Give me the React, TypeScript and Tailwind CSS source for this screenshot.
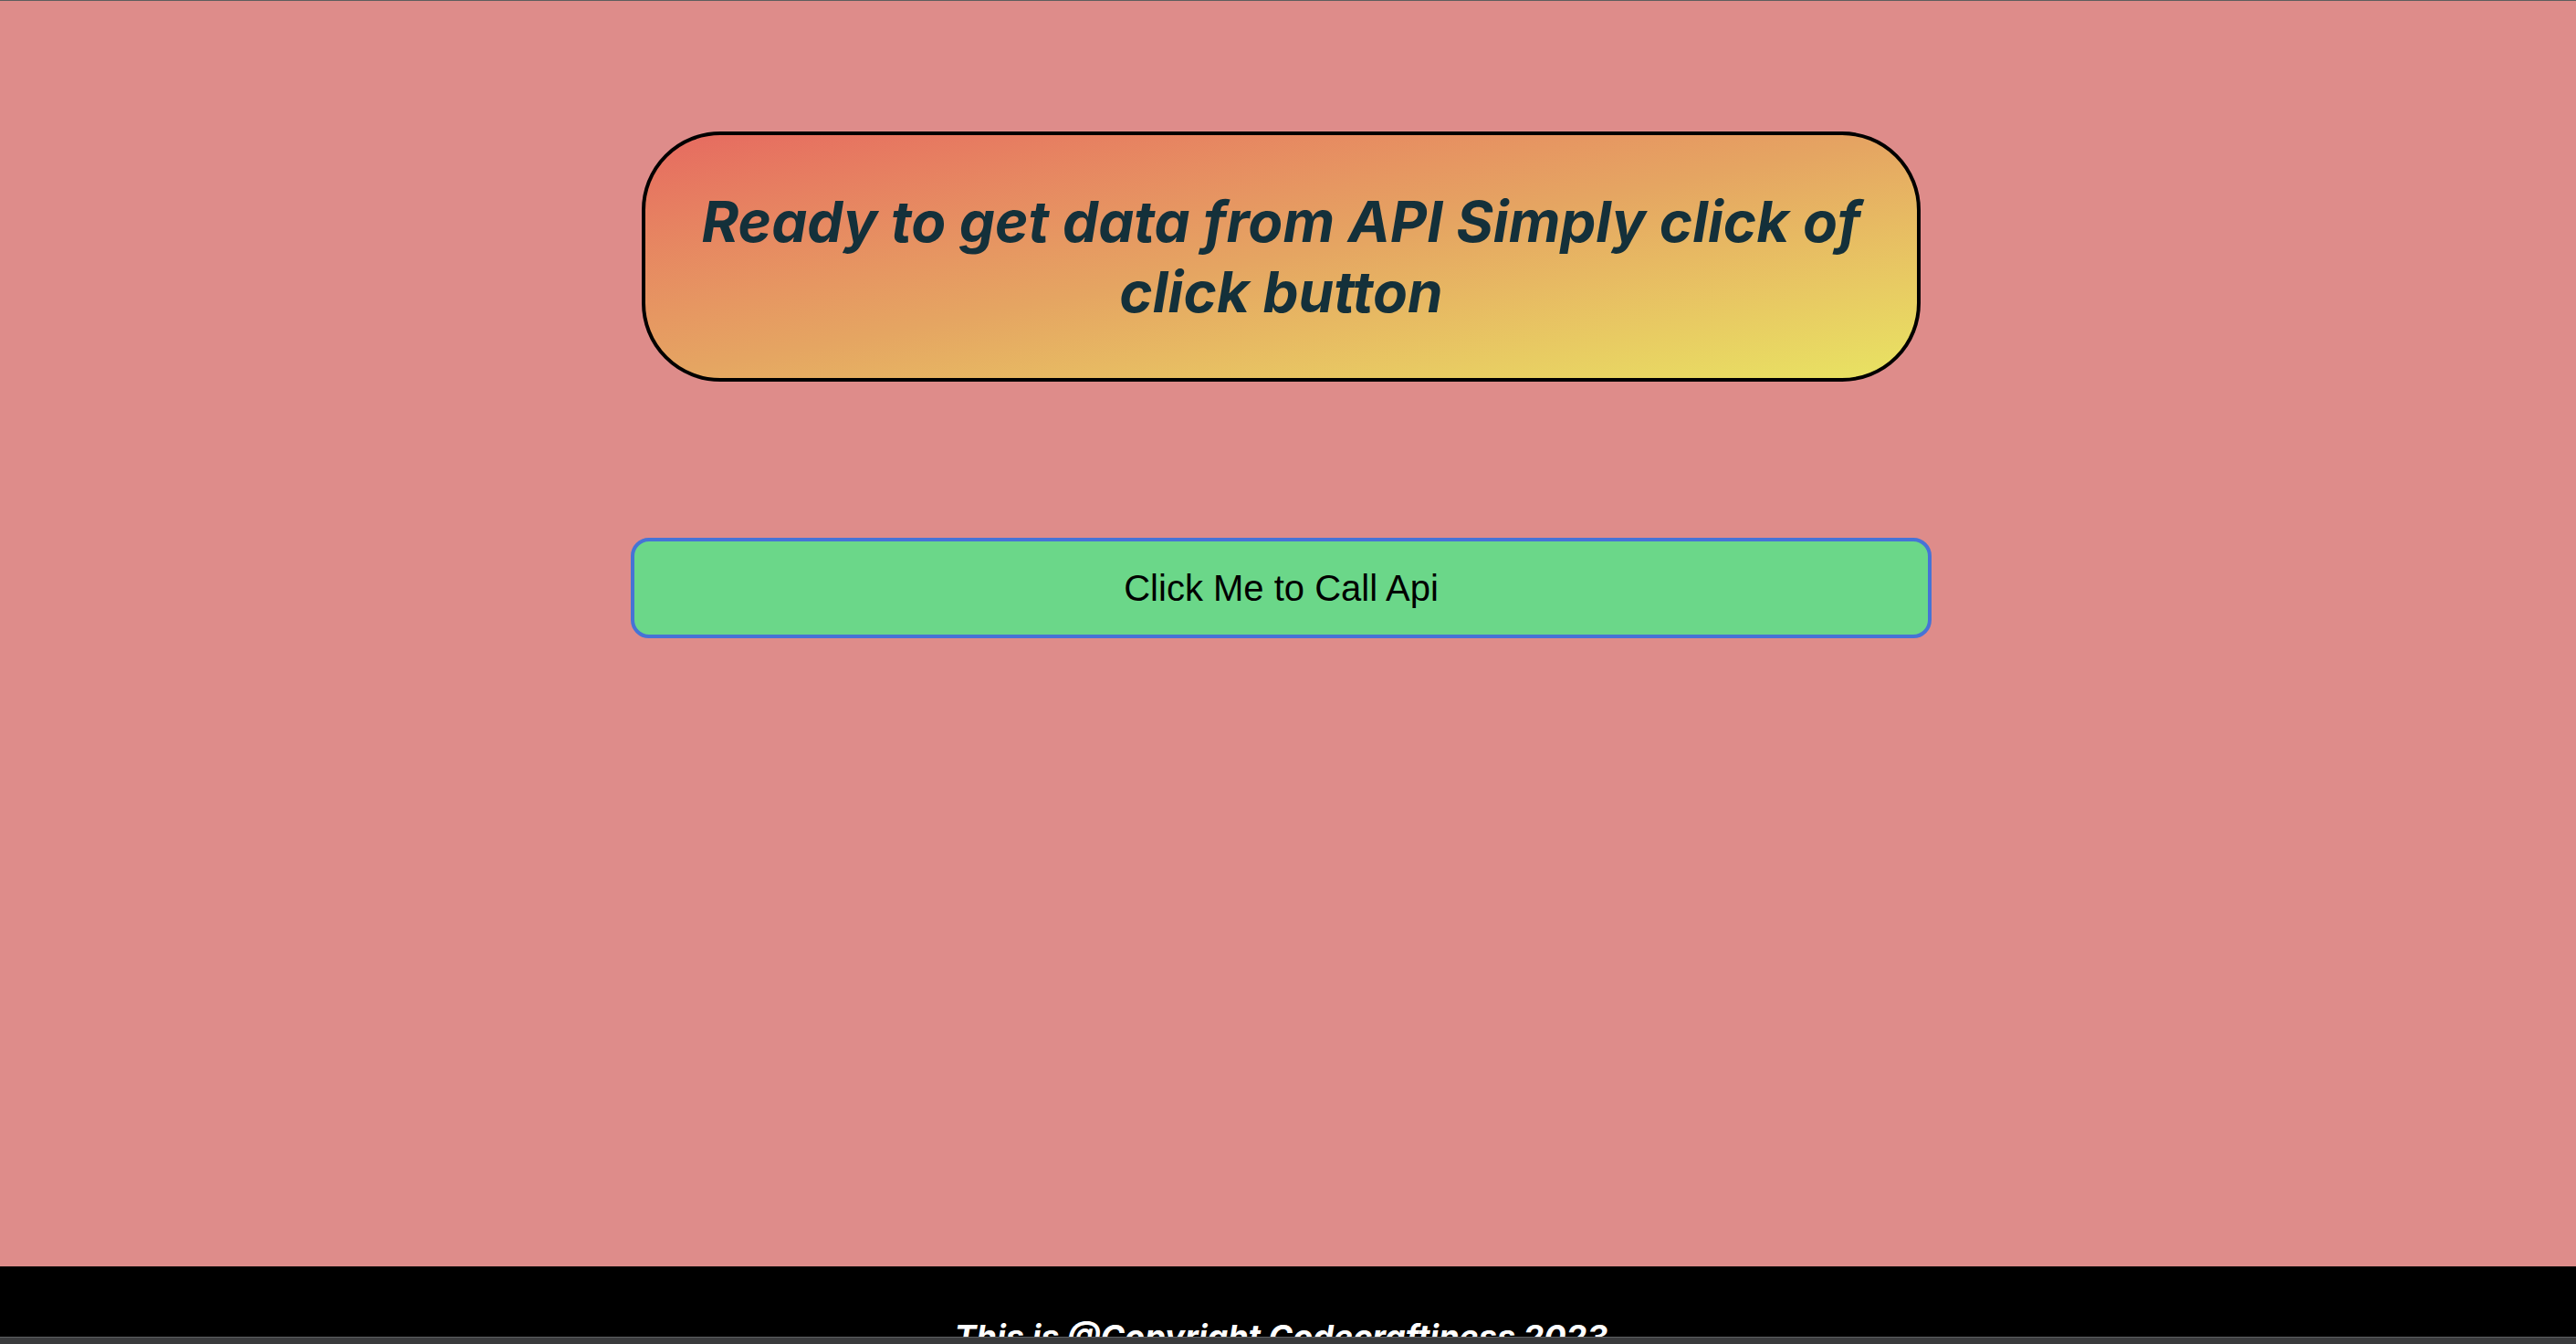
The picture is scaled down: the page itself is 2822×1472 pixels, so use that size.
export default function App() {
  return (
    <div className="flex h-[1472px] flex-col overflow-hidden bg-[#de8c8a] [font-family:Inter,'Noto_Sans',sans-serif]">
      <div className="h-px shrink-0 bg-[#5e5e5e]" />

      <main className="flex h-[1386px] shrink-0 flex-col items-center pt-[143px] pr-[15px]">
        <div className="flex h-[274px] w-[1401px] items-center justify-center rounded-[86px] border-[4px] border-black bg-gradient-to-br from-[#e66a60] via-[#e5a562] to-[#e8e462] px-10">
          <h1 className="text-center text-[62px] leading-[77px] font-bold italic text-[#14303a]">
            Ready to get data from API Simply click of click button
          </h1>
        </div>

        <button
          type="button"
          className="mt-[171px] h-[110px] w-[1425px] rounded-[20px] border-[4px] border-[#4673d6] bg-[#6bd789] text-[40px] text-black [font-family:'Liberation_Sans',Arial,sans-serif]"
        >
          Click Me to Call Api
        </button>
      </main>

      <footer className="h-[77px] shrink-0 overflow-hidden bg-black pt-[50px] text-center">
        <p className="pr-[15px] text-[36px] font-bold italic text-white">
          This is @Copyright Codecraftiness 2023
        </p>
      </footer>

      <div className="h-[8px] shrink-0 border-t border-[#5f6062] bg-[#3a3b3d]" />
    </div>
  );
}
